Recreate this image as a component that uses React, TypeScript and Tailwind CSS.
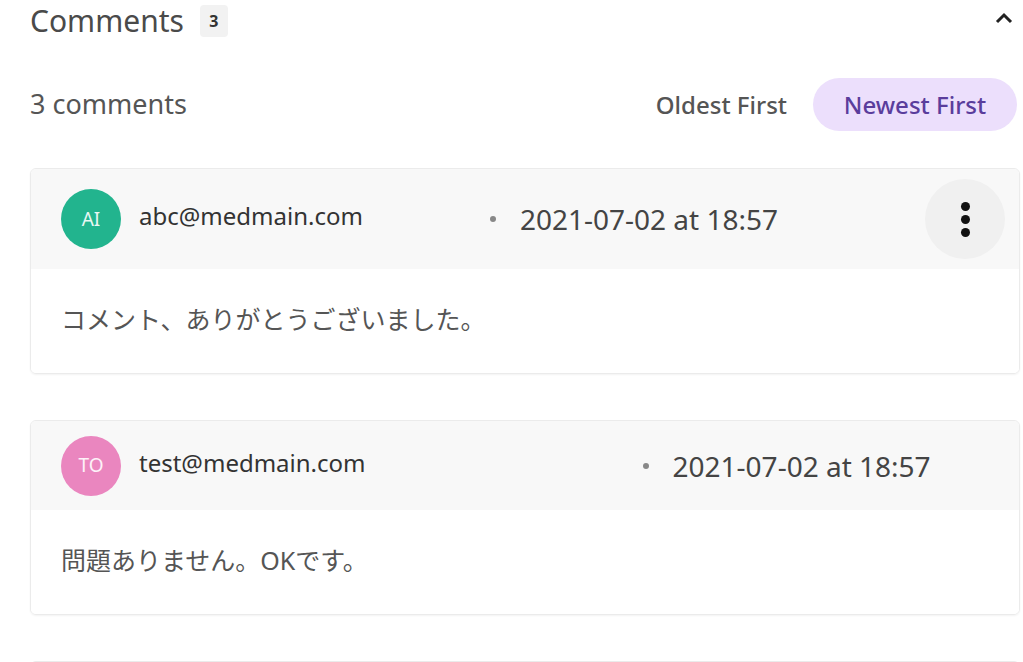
const comments = [
  {
    initials: "AI",
    avatar: "bg-[#22b48e]",
    email: "abc@medmain.com",
    date: "2021-07-02 at 18:57",
    dateGap: "ml-[127px]",
    header: "h-[100px]",
    menu: true,
    body: "コメント、ありがとうございました。",
  },
  {
    initials: "TO",
    avatar: "bg-[#ea86bf]",
    email: "test@medmain.com",
    date: "2021-07-02 at 18:57",
    dateGap: "ml-[277px]",
    header: "h-[89px]",
    menu: false,
    body: "問題ありません。OKです。",
  },
];

export default function App() {
  return (
    <div
      className="w-[1023px] h-[662px] overflow-hidden bg-white pl-[30px] pr-[3px]"
      style={{ fontFamily: '"Noto Sans", "Noto Sans CJK JP", sans-serif' }}
    >
      <div className="flex items-start h-[40px]">
        <h2 className="text-[30px] text-[#4a4a4a] leading-[42px]">Comments</h2>
        <span className="ml-[16px] mt-[5px] w-[28px] h-[32px] bg-[#f2f2f2] rounded-sm flex items-center justify-center text-[16px] font-bold text-[#333]">
          3
        </span>
        <svg className="ml-auto mr-[6px] mt-[11px]" width="20" height="14" viewBox="0 0 20 14">
          <polyline points="3,11 10,4 17,11" fill="none" stroke="#222" strokeWidth="3" />
        </svg>
      </div>

      <div className="flex items-center mt-[38px] h-[53px]">
        <span className="text-[27px] text-[#555]">3 comments</span>
        <div className="ml-auto flex items-center gap-[26px] mr-[3px]">
          <button className="text-[24px] font-medium text-[#555]">Oldest First</button>
          <button className="h-[53px] w-[204px] rounded-full bg-[#ecdffc] text-[24px] font-medium text-[#5a3d9c]">
            Newest First
          </button>
        </div>
      </div>

      <div className="mt-[37px] flex flex-col gap-[46px]">
        {comments.map((c) => (
          <div
            key={c.email}
            className="rounded-md border border-[#ebebeb] shadow-[0_1px_2px_rgba(0,0,0,0.05)] overflow-hidden"
          >
            <div className={`${c.header} bg-[#f8f8f8] flex items-center pl-[30px] pr-[14px]`}>
              <div
                className={`w-[60px] h-[60px] rounded-full ${c.avatar} flex items-center justify-center text-white/90 text-[19px]`}
              >
                {c.initials}
              </div>
              <span className="ml-[18px] -mt-[6px] text-[24px] text-[#333]">{c.email}</span>
              <div className={`${c.dateGap} flex items-center`}>
                <span className="w-[6px] h-[6px] rounded-full bg-[#888]" />
                <span className="ml-[24px] text-[28px] text-[#444]">{c.date}</span>
              </div>
              {c.menu && (
                <button className="ml-auto w-[80px] h-[80px] rounded-full bg-[#f0f0f0] flex flex-col items-center justify-center gap-[4px]">
                  <span className="w-[9px] h-[9px] rounded-full bg-[#111]" />
                  <span className="w-[9px] h-[9px] rounded-full bg-[#111]" />
                  <span className="w-[9px] h-[9px] rounded-full bg-[#111]" />
                </button>
              )}
            </div>
            <div className="h-[104px] bg-white flex items-center pl-[30px] pb-[2px]">
              <p className="text-[25px] text-[#555]">{c.body}</p>
            </div>
          </div>
        ))}
        <div className="h-[60px] rounded-md border border-[#ebebeb] bg-[#f8f8f8]" />
      </div>
    </div>
  );
}
